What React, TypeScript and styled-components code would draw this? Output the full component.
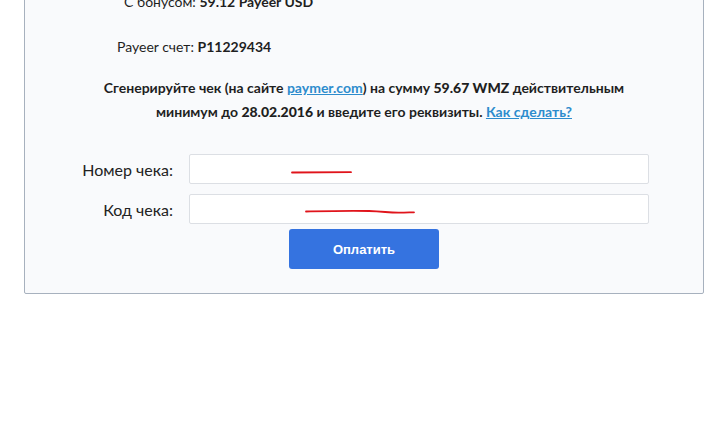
import * as React from "react";
import styled, { createGlobalStyle } from "styled-components";

const GlobalStyle = createGlobalStyle`
    html, body {
        margin: 0;
        padding: 0;
        background: #fff;
    }
    body {
        font-family: Lato, "Noto Sans", "Liberation Sans", sans-serif;
        color: #1f1f1f;
    }
`;

const Page = styled.div`
    width: 705px;
    height: 422px;
    overflow: hidden;
`;

// the page is scrolled: the top of the panel is above the window
const Panel = styled.div`
    margin: -40px 0 0 24px;
    width: 678px;
    padding: 30px 0 24px;
    background: #f9fafc;
    border: 1px solid #a7b1be;
    border-radius: 0 0 2px 2px;
`;

const InfoLine = styled.div<{ $indent: number; $gap?: number }>`
    padding-left: ${({ $indent }) => $indent}px;
    margin-bottom: ${({ $gap }) => $gap || 0}px;
    font-size: 14px;
    line-height: 22px;
`;

const Note = styled.p`
    margin: 0 0 30px;
    text-align: center;
    font-size: 14px;
    font-weight: 700;
    line-height: 24px;
    color: #1f1f1f;

    b {
        font-weight: 900;
    }
`;

const Link = styled.a`
    color: #2d8ccd;
    text-decoration: underline;
    font-weight: 700;
`;

const Form = styled.div`
    display: flex;
    flex-direction: column;
    gap: 10px;
`;

const FieldRow = styled.div`
    display: grid;
    grid-template-columns: 148px 460px;
    column-gap: 16px;
    align-items: center;
`;

const Label = styled.label`
    text-align: right;
    font-size: 16px;
    color: #222;
`;

const InputWrap = styled.div`
    position: relative;
`;

const Input = styled.input`
    box-sizing: border-box;
    width: 460px;
    height: 30px;
    border: 1px solid #dcdfe4;
    border-radius: 2px;
    background: #fff;
    outline: none;
    padding: 0 8px;
`;

const Scribble = styled.svg`
    position: absolute;
    left: 0;
    top: 0;
    pointer-events: none;
`;

const ButtonRow = styled.div`
    display: flex;
    padding-left: 264px;
    margin-top: -5px;
`;

const PayButton = styled.button`
    width: 150px;
    height: 40px;
    border: none;
    border-radius: 3px;
    background: #3573e0;
    color: #fff;
    font-family: "Liberation Sans", Arial, sans-serif;
    font-size: 13px;
    font-weight: 700;
    cursor: pointer;
`;

const App = () => {
    return (
        <Page>
            <GlobalStyle />
            <Panel>
                <InfoLine $indent={99} $gap={23}>
                    С бонусом: <b>59.12 Payeer USD</b>
                </InfoLine>
                <InfoLine $indent={92} $gap={18}>
                    Payeer счет: <b>P11229434</b>
                </InfoLine>
                <Note>
                    Сгенерируйте чек (на сайте <Link href="#">paymer.com</Link>) на сумму <b>59.67 WMZ</b> действительным
                    <br />
                    минимум до <b>28.02.2016</b> и введите его реквизиты. <Link href="#">Как сделать?</Link>
                </Note>
                <Form>
                    <FieldRow>
                        <Label>Номер чека:</Label>
                        <InputWrap>
                            <Input />
                            <Scribble width="460" height="30">
                                <path d="M103 18.5 L162 18.2" stroke="#e0141b" strokeWidth="1.8" fill="none" strokeLinecap="round" />
                            </Scribble>
                        </InputWrap>
                    </FieldRow>
                    <FieldRow>
                        <Label>Код чека:</Label>
                        <InputWrap>
                            <Input />
                            <Scribble width="460" height="30">
                                <path
                                    d="M117 17.5 C140 17 160 16.5 180 17 C195 17.5 200 18.8 210 18.7 C218 18.6 222 18.3 225 18.3"
                                    stroke="#e0141b"
                                    strokeWidth="1.8"
                                    fill="none"
                                    strokeLinecap="round"
                                />
                            </Scribble>
                        </InputWrap>
                    </FieldRow>
                    <ButtonRow>
                        <PayButton>Оплатить</PayButton>
                    </ButtonRow>
                </Form>
            </Panel>
        </Page>
    );
};

export default App;
